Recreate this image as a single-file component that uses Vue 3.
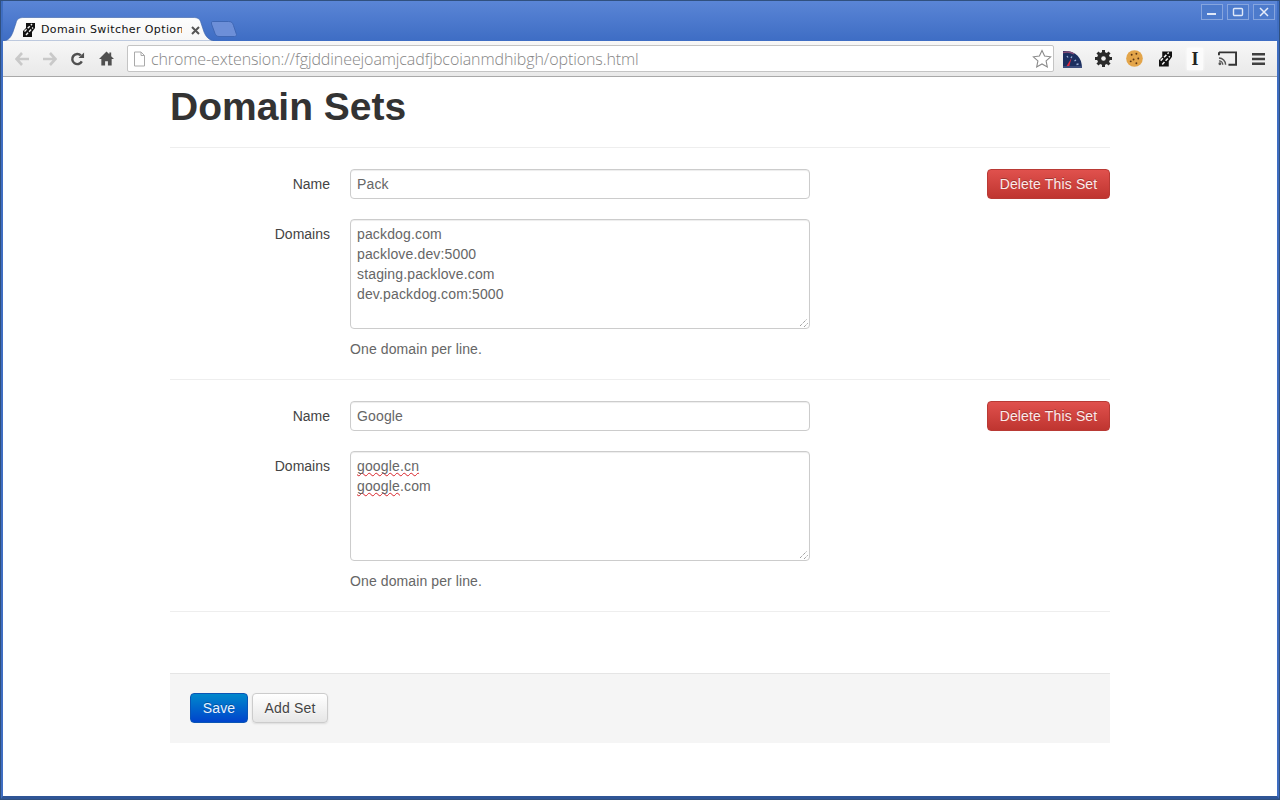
<script setup>
const sets = [
  { name: 'Pack', domains: ['packdog.com', 'packlove.dev:5000', 'staging.packlove.com', 'dev.packdog.com:5000'] },
  { name: 'Google', domains: [] },
]
</script>

<template>
  <div class="window">
    <div class="tabstrip">
      <div class="tab">
        <svg class="tabshape" width="210" height="24" viewBox="0 0 210 24">
          <path d="M0 24 C5 23 7 20 9 15 L12 6 C13 2 15 0.500 20 0.500 L189 0.500 C194 0.500 196 2 197 6 L200 15 C202 20 205 23 210 24 Z" fill="url(#tabg)" stroke="#3a62a8" stroke-width="0.6"/>
          <defs>
            <linearGradient id="tabg" x1="0" y1="0" x2="0" y2="1">
              <stop offset="0" stop-color="#fdfdfd"/>
              <stop offset="1" stop-color="#f6f6f6"/>
            </linearGradient>
          </defs>
        </svg>
        <svg class="tabicon" width="12" height="14" viewBox="0 0 12 14">
          <path d="M3 0h9v5L9 9v5H0V8l3-3z" fill="#111"/>
          <path d="M1.500 8.500L9 1M3 12l7-7.500" stroke="#f4f4f4" stroke-width="1.400" stroke-dasharray="3 1.500" fill="none"/>
        </svg>
        <span class="tabtitle">Domain Switcher Options</span>
        <svg class="tabclose" width="9" height="9" viewBox="0 0 9 9">
          <path d="M1 1l7 7M8 1L1 8" stroke="#555" stroke-width="2"/>
        </svg>
      </div>
      <svg class="newtab" width="26" height="16" viewBox="0 0 26 16">
        <path d="M1.500.5h16c3 0 4 1 5 4l3 9c0 1.500-1 2-2 2H8c-2 0-3-1-4-3L.5 3c0-1.500 0-2.500 1-2.500z" fill="#6d8fd8" stroke="#3f67b4"/>
      </svg>
      <div class="winbtns">
        <span class="winbtn">
          <svg width="12" height="8" viewBox="0 0 12 8"><rect x="1" y="5" width="9" height="2" fill="#dfe8f8"/></svg>
        </span>
        <span class="winbtn">
          <svg width="12" height="10" viewBox="0 0 12 10"><rect x="1.500" y="1.500" width="9" height="7" rx="1" fill="none" stroke="#dfe8f8" stroke-width="1.400"/></svg>
        </span>
        <span class="winbtn">
          <svg width="12" height="10" viewBox="0 0 12 10"><path d="M2 1l8 8M10 1L2 9" stroke="#e6edfa" stroke-width="1.500"/></svg>
        </span>
      </div>
    </div>

    <div class="toolbar">
      <svg class="nav n1" width="14" height="14" viewBox="0 0 14 14">
        <path d="M7 1L1.500 7 7 13M2 7h12" fill="none" stroke="#c9c9c9" stroke-width="2.600"/>
      </svg>
      <svg class="nav n2" width="14" height="14" viewBox="0 0 14 14">
        <path d="M7 1l5.500 6L7 13M12 7H0" fill="none" stroke="#c9c9c9" stroke-width="2.600"/>
      </svg>
      <svg class="nav n3" width="15" height="16" viewBox="0 0 16 16">
        <path d="M12.600 10.600A5.400 5.400 0 1 1 11.600 4.200" fill="none" stroke="#505050" stroke-width="2.600"/>
        <path d="M9 6.800h6V1z" fill="#505050"/>
      </svg>
      <svg class="nav n4" width="15" height="15" viewBox="0 0 16 15">
        <path d="M8 0L0 8h2.500v7H6.500v-4.500h3V15h4V8H16L13 5V1h-2v2z" fill="#505050"/>
      </svg>
      <div class="omnibox">
        <svg width="13" height="16" viewBox="0 0 13 16">
          <path d="M1.500 1h6.500l3.500 3.500V15h-10zM8 1v3.500h3.500" fill="#fff" stroke="#aaa"/>
        </svg>
        <span class="url">chrome-extension://fgjddineejoamjcadfjbcoianmdhibgh/options.html</span>
        <svg class="star" width="20" height="19" viewBox="0 0 20 19">
          <path d="M10 1.500l2.600 5.600 6 .7-4.500 4.100 1.200 6L10 15l-5.300 2.900 1.200-6L1.400 7.800l6-.7z" fill="#fff" stroke="#8a8a8a" stroke-width="1.100"/>
        </svg>
      </div>
      <div class="exts">
        <svg class="e-gauge" width="19" height="18" viewBox="0 0 19 18">
          <path d="M0 18V1C12 0 19 7 19 18z" fill="#1c2f5f"/>
          <path d="M0 2.500C4 1.500 8 2 11 4" fill="none" stroke="#8a4f78" stroke-width="1.500"/>
          <path d="M4 6l1 1.500M9 6.500L8 8M13 10l-1.500 1M15.500 14l-2 .5" stroke="#9fb4da" stroke-width="1.300"/>
          <path d="M3 17L8.500 8 6 17z" fill="#e0283f"/>
          <rect y="16" width="19" height="2" fill="#3b4d7d"/>
        </svg>
        <svg width="17" height="17" viewBox="0 0 17 17">
          <circle cx="8.500" cy="8.500" r="4.500" fill="none" stroke="#2b2b2b" stroke-width="4"/>
          <path d="M8.500 0v17M0 8.500h17M2.500 2.500l12 12M14.500 2.500l-12 12" stroke="#2b2b2b" stroke-width="3"/>
          <circle cx="8.500" cy="8.500" r="2.300" fill="#f0f0f0"/>
        </svg>
        <svg width="17" height="17" viewBox="0 0 18 18">
          <circle cx="9" cy="9" r="8.800" fill="#e3a54a"/>
          <circle cx="6" cy="5" r="1" fill="#5b3514"/>
          <circle cx="11" cy="4" r="1" fill="#5b3514"/>
          <circle cx="13" cy="9" r="1" fill="#5b3514"/>
          <circle cx="8" cy="10" r="1" fill="#5b3514"/>
          <circle cx="5" cy="12" r="1" fill="#5b3514"/>
          <circle cx="11" cy="14" r="1" fill="#5b3514"/>
        </svg>
        <svg class="e-shift2" width="13" height="16" viewBox="0 0 12 14">
          <path d="M3 0h9v5L9 9v5H0V8l3-3z" fill="#111"/>
          <path d="M1.500 8.500L9 1M3 12l7-7.500" stroke="#f4f4f4" stroke-width="1.400" stroke-dasharray="3 1.500" fill="none"/>
        </svg>
        <span class="cursor-ext">I</span>
        <svg class="e-shift1" width="19" height="15" viewBox="0 0 20 15">
          <path d="M1 1h18v13h-8M1 4V1" fill="none" stroke="#333" stroke-width="2"/>
          <path d="M1 7a7 7 0 0 1 7 7M1 10a4 4 0 0 1 4 4" fill="none" stroke="#555" stroke-width="1.500"/>
          <circle cx="2" cy="13" r="1.500" fill="#555"/>
        </svg>
        <svg class="e-shift1" width="13" height="12" viewBox="0 0 13 12">
          <path d="M0 1.250h13M0 6h13M0 10.750h13" stroke="#404040" stroke-width="2.500"/>
        </svg>
      </div>
    </div>

    <div class="page">
      <div class="container">
        <h1>Domain Sets</h1>
        <section v-for="s in sets" :key="s.name" class="set">
          <div class="row">
            <label>Name</label>
            <div class="input">{{ s.name }}</div>
            <button class="btn danger">Delete This Set</button>
          </div>
          <div class="row second">
            <label>Domains</label>
            <div class="field">
              <div class="textarea">
                <template v-if="s.domains.length">
                  <div v-for="d in s.domains" :key="d">{{ d }}</div>
                </template>
                <template v-else>
                  <div><span class="typo">google.cn</span></div>
                  <div><span class="typo">google</span>.com</div>
                </template>
                <svg class="grip" width="8" height="8" viewBox="0 0 8 8">
                  <path d="M0 7l7-7M4 8l4-4" stroke="#777" stroke-width="1" stroke-dasharray="1 1"/>
                </svg>
              </div>
              <p class="help">One domain per line.</p>
            </div>
          </div>
        </section>
        <div class="actions">
          <button class="btn primary">Save</button>
          <button class="btn plain">Add Set</button>
        </div>
      </div>
    </div>
  </div>
</template>

<style>
html, body { margin: 0; padding: 0; overflow: hidden; }
</style>

<style scoped>
.window {
  width: 1280px;
  height: 800px;
  box-sizing: border-box;
  border: 3px solid #3f6ec2;
  border-top: 1px solid #4a6fb3;
  border-bottom: 4px solid #2f5596;
  outline: 1px solid #30507f;
  outline-offset: -1px;
  display: flex;
  flex-direction: column;
  overflow: hidden;
  font-family: "Liberation Sans", Arial, sans-serif;
  background: #fff;
}
.tabstrip {
  height: 40px;
  flex: none;
  display: flex;
  align-items: flex-end;
  position: relative;
  background: linear-gradient(#5a85d6, #3e6dc4);
  margin: 0 -3px;
}
.tab {
  width: 210px;
  height: 24px;
  margin-left: 4px;
  box-sizing: border-box;
  padding-top: 2px;
  position: relative;
  display: flex;
  align-items: center;
  flex: none;
}
.tabshape { position: absolute; left: 0; top: 0; }
.tabicon { position: relative; margin-left: 19px; flex: none; }
.tabtitle {
  position: relative;
  margin-left: 6px;
  width: 141px;
  flex: none;
  font: 11px/16px "DejaVu Sans", sans-serif;
  letter-spacing: 0.4px;
  color: #111;
  white-space: nowrap;
  overflow: hidden;
}
.tabclose { position: relative; margin-left: 9px; flex: none; }
.newtab { margin-left: -3px; margin-bottom: 4px; flex: none; }
.winbtns {
  position: absolute;
  right: 5px;
  top: 3px;
  display: flex;
  gap: 4px;
}
.winbtn {
  width: 22px;
  height: 16px;
  box-sizing: border-box;
  border: 1px solid #86a5de;
  background: #4d7bcc;
  display: flex;
  align-items: center;
  justify-content: center;
}
.toolbar {
  height: 36px;
  flex: none;
  box-sizing: border-box;
  display: flex;
  align-items: center;
  background: linear-gradient(#f7f7f7, #e9e9e9);
  border-bottom: 1px solid #a9a9a9;
  padding-left: 12px;
  border-radius: 0 3px 0 0;
}
.nav { flex: none; }
.n1 { margin-right: 14px; }
.n2 { margin-right: 13px; }
.n3 { margin-right: 14px; }
.n4 { margin-right: 13px; }
.omnibox {
  width: 927px;
  height: 27px;
  flex: none;
  box-sizing: border-box;
  background: #fff;
  border: 1px solid #c4c4c4;
  border-radius: 2px;
  display: flex;
  align-items: center;
  padding-left: 5px;
}
.url {
  margin-left: 5px;
  font: 300 16px/20px "Open Sans", sans-serif;
  color: #868686;
  white-space: nowrap;
  letter-spacing: -0.09px;
}
.star { margin-left: auto; margin-right: 1px; }
.exts {
  display: flex;
  align-items: center;
  gap: 14px;
  margin-left: 9px;
  flex: none;
}
.e-gauge { margin-right: -1px; }
.e-shift2 { margin-left: 2px; }
.e-shift1 { margin-left: 1px; }
.cursor-ext {
  font: bold 18px/22px "Liberation Serif", serif;
  color: #222;
  width: 16px;
  margin-left: 1px;
  text-align: center;
  background: #fbfbfb;
  box-shadow: 0 0 3px #fff;
}
.page { flex: 1; min-height: 0; }
.container {
  width: 940px;
  margin: 0 auto;
}
h1 {
  margin: 0;
  height: 71px;
  box-sizing: border-box;
  padding-top: 10px;
  font-size: 39px;
  line-height: 40px;
  font-weight: bold;
  color: #333;
  border-bottom: 1px solid #eee;
}
.set {
  height: 232px;
  box-sizing: border-box;
  padding-top: 21px;
  border-bottom: 1px solid #eee;
}
.row { display: flex; align-items: flex-start; }
.second { margin-top: 20px; }
label {
  width: 160px;
  flex: none;
  text-align: right;
  font-size: 14px;
  line-height: 20px;
  padding-top: 5px;
  color: #444;
}
.input {
  width: 460px;
  height: 30px;
  margin-left: 20px;
  box-sizing: border-box;
  border: 1px solid #ccc;
  border-radius: 4px;
  box-shadow: inset 0 1px 1px rgba(0, 0, 0, .075);
  padding: 4px 6px;
  font-size: 14px;
  line-height: 20px;
  color: #666;
  letter-spacing: 0.15px;
}
.field { margin-left: 20px; width: 460px; }
.textarea {
  position: relative;
  height: 110px;
  box-sizing: border-box;
  border: 1px solid #ccc;
  border-radius: 4px;
  box-shadow: inset 0 1px 1px rgba(0, 0, 0, .075);
  padding: 4px 6px;
  font-size: 14px;
  line-height: 20px;
  color: #666;
  letter-spacing: 0.15px;
}
.typo {
  text-decoration: underline wavy #d8232a 1px;
  text-decoration-skip-ink: none;
  text-underline-offset: 1px;
}
.grip { position: absolute; right: 1px; bottom: 1px; }
.help {
  margin: 10px 0 0;
  font-size: 14px;
  line-height: 20px;
  color: #666;
  letter-spacing: 0.1px;
}
.btn {
  box-sizing: border-box;
  height: 30px;
  padding: 0;
  border-radius: 4px;
  font: 14px/20px "Liberation Sans", Arial, sans-serif;
  letter-spacing: 0.15px;
  flex: none;
}
.danger {
  margin-left: auto;
  width: 123px;
  color: #fbeaea;
  background: linear-gradient(#e0514d, #bf3530);
  border: 1px solid #b93a35;
  text-shadow: 0 -1px 0 rgba(0, 0, 0, .25);
}
.actions {
  margin-top: 61px;
  height: 70px;
  box-sizing: border-box;
  padding: 19px 20px;
  background: #f5f5f5;
  border-top: 1px solid #e5e5e5;
  display: flex;
  gap: 4px;
  align-items: flex-start;
}
.primary {
  width: 58px;
  color: #e8f2ff;
  background: linear-gradient(#0088cc, #0044cc);
  border: 1px solid #0a55b5;
  text-shadow: 0 -1px 0 rgba(0, 0, 0, .25);
}
.plain {
  width: 76px;
  color: #444;
  background: linear-gradient(#fff, #e6e6e6);
  border: 1px solid #ccc;
  box-shadow: 0 1px 2px rgba(0, 0, 0, .1);
  text-shadow: 0 1px 1px rgba(255, 255, 255, .75);
}
</style>
